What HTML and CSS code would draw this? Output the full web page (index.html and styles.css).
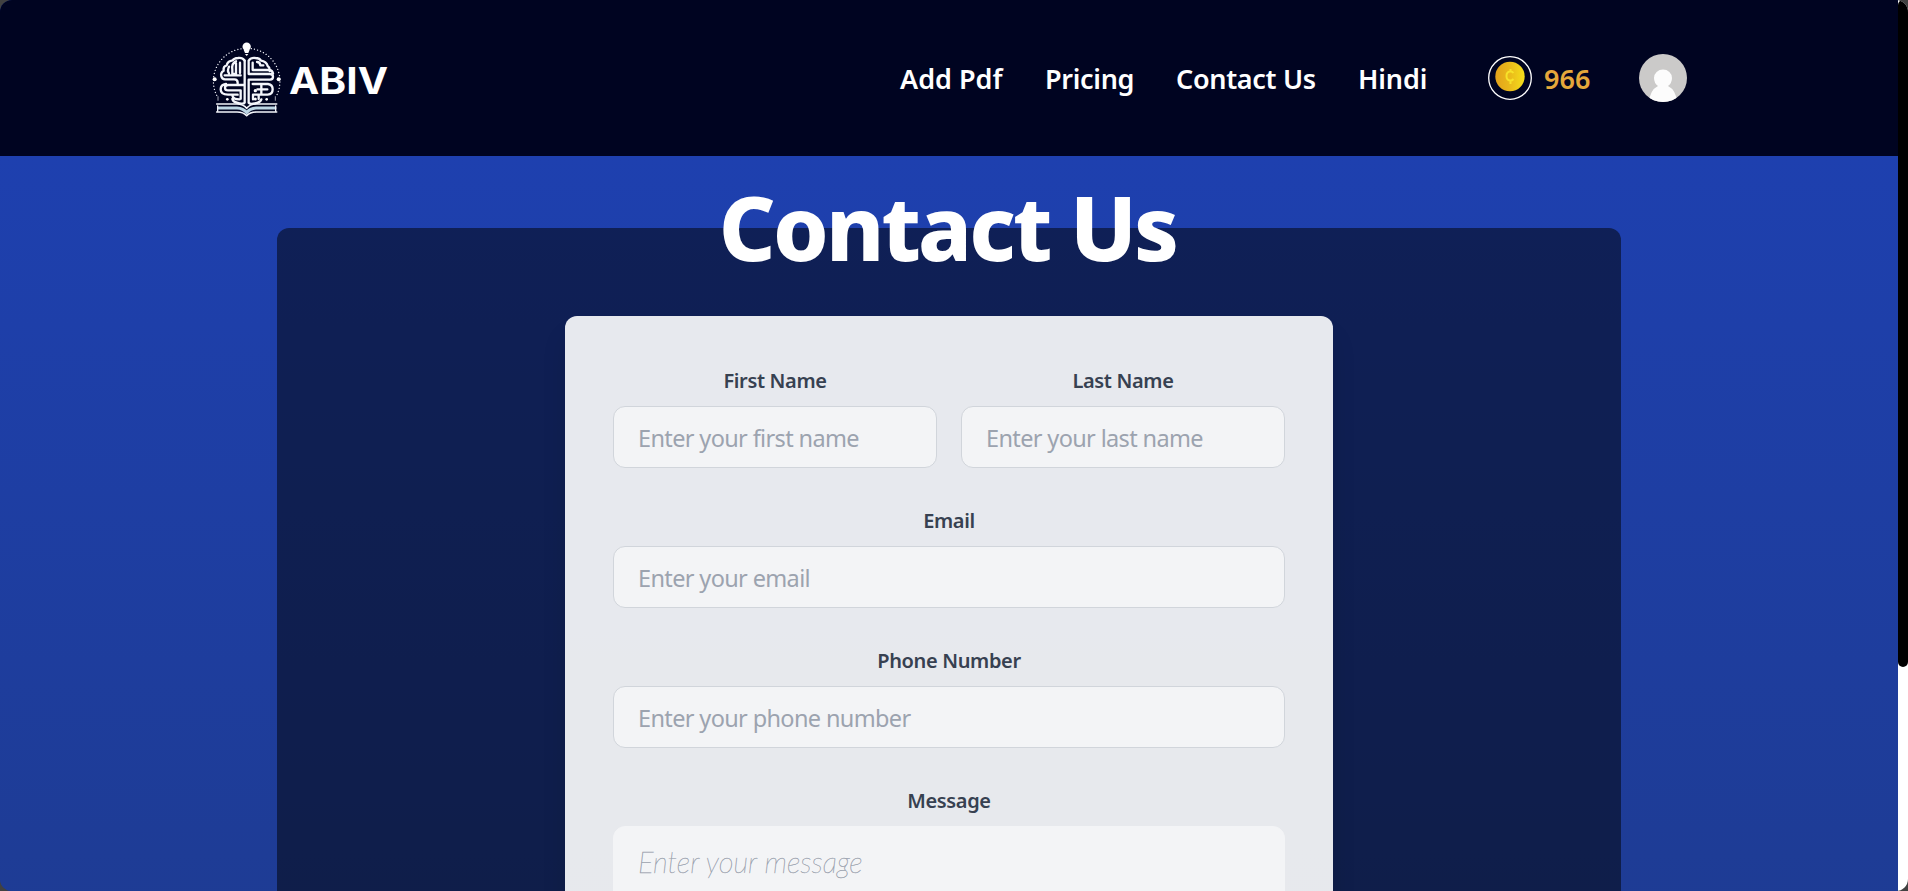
FILE: index.html
```
<!DOCTYPE html>
<html lang="en">
<head>
<meta charset="utf-8">
<title>ABIV - Contact Us</title>
<link rel="stylesheet" href="styles.css">
</head>
<body>
<div class="window">
  <div class="page">
    <header class="header">
      <a class="brand">
        <svg class="brand-mark" viewBox="36 36 210 225" fill="none" stroke="#f4f6fb" stroke-width="7" stroke-linecap="round" stroke-linejoin="round">
          <path d="M50 196A98 98 0 0 1 126 56M154 56A98 98 0 0 1 230 196" stroke-width="4" stroke-dasharray="0.1 9.5"/>
          <g fill="#fff" stroke="none">
            <circle cx="140" cy="50" r="12.5"/><path d="M131 59h18l-4 10h-10z"/><path d="M135 72h10l-5 6z"/>
            <circle cx="44" cy="148" r="6"/><circle cx="236" cy="148" r="6"/>
            <circle cx="166" cy="182" r="5"/><circle cx="166" cy="207" r="4.5"/><circle cx="82" cy="208" r="4"/><circle cx="200" cy="208" r="4"/>
          </g>
          <path d="M134 92q-7-10-20-8q-12 1-16 7q-15 2-18 15q-11 3-9 16q-10 6-7 17q2 9 11 9h28q10 0 10 10v3"/>
          <path d="M134 92v126q-3 5-15 2q-20-3-22-13M120 98v31M108 94q-14 6-11 25v13h11V100M87 110q-6 12 0 20M74 136h48M134 165H84q-9 0-9 8t9 8h38M113 194H84q-22 0-22-16q0-14 16-16M122 181v25M97 194q0 14 22 14"/>
          <path d="M146 92q7-10 20-8q12 0 17 8q16 2 20 16q7 4 6 15M146 92v40h64q9 0 9 8t-9 9h-64v69q5 6 18 2q17-2 20-12"/>
          <path d="M158 98v22h50q10 2 11 11M171 96q9 0 10 10h9M158 162h46q14 2 14 16q0 15-15 16h-44v14M172 178h30M184 166v28M176 194v13"/>
          <path d="M54 200v11M226 200v11" stroke-width="2"/>
          <path d="M50 222h60q20 0 30 13q10-13 30-13h60M50 246h61q19 0 29 11q10-11 29-11h61" stroke-width="5"/>
          <path d="M55 234h56q19 1 29 14q10-13 29-14h56" stroke="#bdd7e5" stroke-width="9"/>
          <path d="M53 228v16M227 228v16" stroke-width="4"/>
        </svg>
        <svg class="brand-name" viewBox="0 0 100 32"><text x="-1" y="29" textLength="99" lengthAdjust="spacingAndGlyphs">ABIV</text></svg>
      </a>
      <nav class="nav">
        <a class="nav-link add">Add Pdf</a>
        <a class="nav-link pricing">Pricing</a>
        <a class="nav-link contact">Contact Us</a>
        <a class="nav-link hindi">Hindi</a>
      </nav>
      <div class="coins">
        <svg class="coin" viewBox="0 0 44 44">
          <defs><linearGradient id="gold"><stop offset="0" stop-color="#e3a21b"/><stop offset=".45" stop-color="#e9b71b"/><stop offset="1" stop-color="#f5df1b"/></linearGradient></defs>
          <circle cx="22" cy="22" r="21.3" fill="none" stroke="#fff" stroke-width="1.3"/>
          <circle cx="22" cy="20.5" r="14.7" fill="url(#gold)"/>
          <path d="M25.5 17q-1.500-2-3.500-1.500q-3.500.5-3.500 4.500t3.500 4.500q2 .2 3.500-1.500M22.500 13v3M22.500 24v4" fill="none" stroke="#f7e229" stroke-width="2"/>
        </svg>
        <span class="coin-count">966</span>
      </div>
      <svg class="avatar" viewBox="0 0 48 48">
        <defs><clipPath id="round"><circle cx="24" cy="24" r="24"/></clipPath></defs>
        <g clip-path="url(#round)">
          <rect width="48" height="48" fill="#cbcac9"/>
          <path d="M10 48q1-12 9-16q-4-3-4-8a9 8.500 0 0 1 18 0q0 5-4 8q8 4 9 16z" fill="#fcfcfc"/>
        </g>
      </svg>
    </header>
    <main class="main">
      <section class="panel">
        <h1 class="title"><span>Contact Us</span></h1>
        <form class="card">
          <div class="row">
            <div class="field"><label class="label">First Name</label><input class="input first" placeholder="Enter your first name"></div>
            <div class="field"><label class="label">Last Name</label><input class="input last" placeholder="Enter your last name"></div>
          </div>
          <div class="field"><label class="label">Email</label><input class="input" placeholder="Enter your email"></div>
          <div class="field"><label class="label">Phone Number</label><input class="input" placeholder="Enter your phone number"></div>
          <div class="field"><label class="label">Message</label><textarea class="input message" placeholder="Enter your message"></textarea></div>
        </form>
      </section>
    </main>
  </div>
  <div class="scrollbar"><div class="thumb"></div></div>
</div>
</body>
</html>
```
FILE: styles.css
```
* { box-sizing: border-box; }
body { margin: 0; background: #414141; font-family: "Noto Sans", "Open Sans", sans-serif; overflow: hidden; }
.window { display: flex; height: 891px; border-radius: 12px; overflow: hidden; }
.page { flex: 1; height: 891px; overflow: hidden; background: #1e3a8a; }
.header { display: flex; align-items: center; height: 156px; padding-left: 212px; background: #000421; }
.brand { display: flex; align-items: center; gap: 8px; width: 688px; }
.brand-mark { width: 70px; height: 75px; margin-top: 2px; }
.brand-name { width: 100px; height: 32px; margin-top: 5px; overflow: visible; }
.brand-name text { font-family: Inter, sans-serif; font-weight: 700; font-size: 37px; fill: #fff; }
.nav { display: flex; margin-top: 2px; color: #fff; font-size: 27px; font-weight: 600; line-height: 40px; white-space: nowrap; }
.nav-link { letter-spacing: -0.3px; }
.add { width: 145px; letter-spacing: 0; }
.pricing { width: 131px; }
.contact { width: 182px; }
.hindi { width: 130px; letter-spacing: -0.1px; }
.coins { display: flex; align-items: center; gap: 12px; width: 151px; }
.coin { width: 44px; height: 44px; }
.coin-count { margin-top: 2px; color: #e5a83b; font-size: 27px; font-weight: 600; line-height: 40px; }
.avatar { width: 48px; height: 48px; }
.main { height: 1034px; padding-top: 72px; background: linear-gradient(#1e40af, #1e3a8a); }
.panel { width: 1344px; height: 962px; margin: 0 auto; border-radius: 12px; background: rgba(0, 0, 0, .5); display: flex; flex-direction: column; align-items: center; }
.title { height: 88px; margin: 0; color: #fff; font-size: 88.500px; font-weight: 800; line-height: 88px; letter-spacing: -2.800px; white-space: nowrap; }
.title span { display: block; margin-top: -45px; margin-left: -3px; }
.card { width: 768px; height: 800px; padding: 48px; border-radius: 12px; background: rgba(255, 255, 255, .9); display: flex; flex-direction: column; gap: 36px; box-shadow: 0 20px 25px rgba(0, 0, 0, .1); }
.row { display: grid; grid-template-columns: 1fr 1fr; gap: 24px; }
.field { display: flex; flex-direction: column; }
.label { height: 42px; color: #374151; font-size: 20px; font-weight: 600; line-height: 34px; letter-spacing: -0.350px; text-align: center; }
.field .input { width: 100%; height: 62px; padding: 1px 24px 0; border: 1px solid #d1d5db; border-radius: 12px; background: #f3f4f6; font: 400 23.500px/32px "Noto Sans", sans-serif; letter-spacing: -0.640px; }
.input::placeholder { color: #9ca3af; opacity: 1; }
.field .message { height: 160px; padding: 18px 24px; border-color: #f3f4f6; resize: none; font: italic 100 29px/34px Lato, sans-serif; letter-spacing: 0; }
.message::placeholder { color: #8f97a6; -webkit-text-stroke: .35px #9ca3af; }
.scrollbar { width: 10px; background: #fff; }
.thumb { height: 667px; border-radius: 5px; background: #000; }
```
